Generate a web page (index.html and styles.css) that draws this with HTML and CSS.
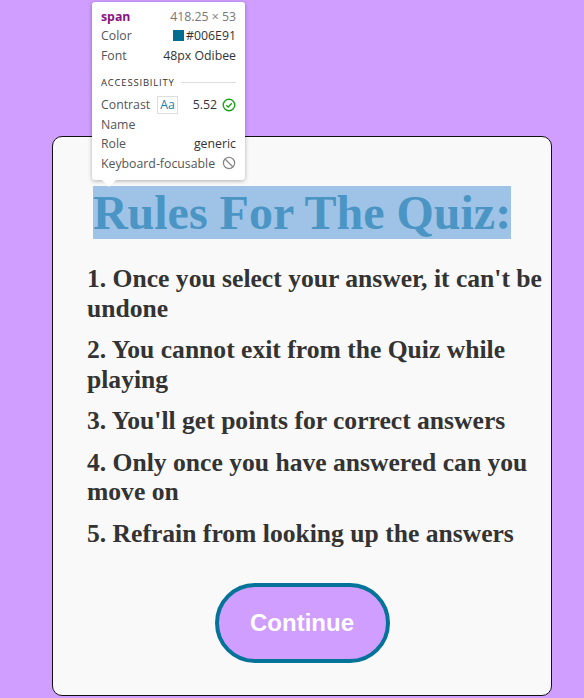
FILE: index.html
```html
<!DOCTYPE html>
<html lang="en">
<head>
<meta charset="utf-8">
<title>Quiz Rules</title>
<link rel="stylesheet" href="styles.css">
</head>
<body>
<main class="card">
  <h1 class="title"><span class="title-text">Rules For The Quiz:</span></h1>
  <ol class="rules">
    <li>1. Once you select your answer, it can't be undone</li>
    <li>2. You cannot exit from the Quiz while playing</li>
    <li>3. You'll get points for correct answers</li>
    <li>4. Only once you have answered can you move on</li>
    <li>5. Refrain from looking up the answers</li>
  </ol>
  <div class="actions"><button class="continue">Continue</button></div>
</main>

<div class="tip">
  <div class="tip-row tip-head"><span class="tag">span</span><span class="dim">418.25 × 53</span></div>
  <div class="tip-row"><span class="lbl">Color</span><span class="val"><i class="swatch"></i>#006E91</span></div>
  <div class="tip-row"><span class="lbl">Font</span><span class="val">48px Odibee</span></div>
  <div class="tip-section"><span>ACCESSIBILITY</span><i class="rule"></i></div>
  <div class="tip-row"><span class="lbl">Contrast <b class="aa">Aa</b></span><span class="val">5.52 <svg class="ico" viewBox="0 0 14 14" width="14" height="14"><circle cx="7" cy="7" r="5.8" fill="none" stroke="#1aa31a" stroke-width="1.4"/><path d="M4.3 7.2 L6.2 9 L9.8 5.2" fill="none" stroke="#1aa31a" stroke-width="1.4"/></svg></span></div>
  <div class="tip-row"><span class="lbl">Name</span><span class="val"></span></div>
  <div class="tip-row"><span class="lbl">Role</span><span class="val">generic</span></div>
  <div class="tip-row"><span class="lbl">Keyboard-focusable</span><span class="val"><svg class="ico" viewBox="0 0 14 14" width="14" height="14"><circle cx="7" cy="7" r="5.6" fill="none" stroke="#888" stroke-width="1.3"/><path d="M3 3 L11 11" stroke="#888" stroke-width="1.3"/></svg></span></div>
  <i class="tip-arrow"></i>
</div>
</body>
</html>
```
FILE: styles.css
```css
html, body {
  margin: 0;
  padding: 0;
}
body {
  background: #d09eff;
  min-height: 698px;
  padding-top: 136px;
  box-sizing: border-box;
  font-family: "Liberation Serif", "Times New Roman", serif;
}
.card {
  margin-left: 52px;
  width: 500px;
  height: 560px;
  box-sizing: border-box;
  border: 1px solid #111;
  border-radius: 10px;
  background: #f9f9f9;
  padding: 49px 0 0 34px;
}
.title {
  margin: 0 34px 0 0;
  text-align: center;
  font-size: 48px;
  line-height: 53px;
  font-weight: bold;
}
.title-text {
  background: #9ec3e7;
  color: #4a95c4;
}
.rules {
  list-style: none;
  margin: 25px 0 0 0;
  padding: 0;
  color: #333;
  font-size: 25.6px;
  line-height: 29.5px;
  font-weight: bold;
}
.rules li {
  margin-bottom: 12px;
}
.actions {
  display: flex;
  justify-content: center;
  padding-right: 34px;
  margin-top: 35px;
}
.continue {
  width: 175px;
  height: 80px;
  border: 4px solid #04739a;
  border-radius: 40px;
  background: #d09eff;
  color: #fff;
  font-family: "Liberation Sans", Arial, sans-serif;
  font-weight: bold;
  font-size: 24px;
}

/* devtools inspect tooltip */
.tip {
  position: absolute;
  left: 92px;
  top: 2px;
  width: 153px;
  box-sizing: border-box;
  padding: 4px 9px 7px 9px;
  background: #fff;
  border-radius: 3px;
  box-shadow: 0 1px 4px rgba(0,0,0,0.3);
  font-family: "Open Sans", "Noto Sans", sans-serif;
  font-size: 12.3px;
  color: #333;
}
.tip-row {
  display: flex;
  justify-content: space-between;
  align-items: center;
  height: 19.5px;
  white-space: nowrap;
}
.tip-head {
  height: 20px;
}
.tag {
  color: #881280;
  font-weight: bold;
}
.dim {
  color: #777;
}
.lbl {
  color: #555;
  display: flex;
  align-items: center;
}
.val {
  color: #333;
  display: flex;
  align-items: center;
  gap: 5px;
}
.swatch {
  display: inline-block;
  width: 11px;
  height: 11px;
  background: #006e91;
  margin-right: -3px;
}
.tip-section {
  display: flex;
  align-items: center;
  gap: 6px;
  height: 30px;
  padding-top: 4px;
  box-sizing: border-box;
  font-size: 9.5px;
  letter-spacing: 0.8px;
  color: #333;
}
.tip-section .rule {
  flex: 1;
  height: 1px;
  background: #ddd;
}
.aa {
  font-weight: normal;
  color: #1a7eb0;
  border: 1px solid #ddd;
  padding: 0 2px;
  margin-left: 7px;
  line-height: 16px;
}
.ico {
  display: block;
}
.tip-arrow {
  position: absolute;
  left: 10px;
  bottom: -7px;
  width: 0;
  height: 0;
  border-left: 7px solid transparent;
  border-right: 7px solid transparent;
  border-top: 7px solid #fff;
}
```
